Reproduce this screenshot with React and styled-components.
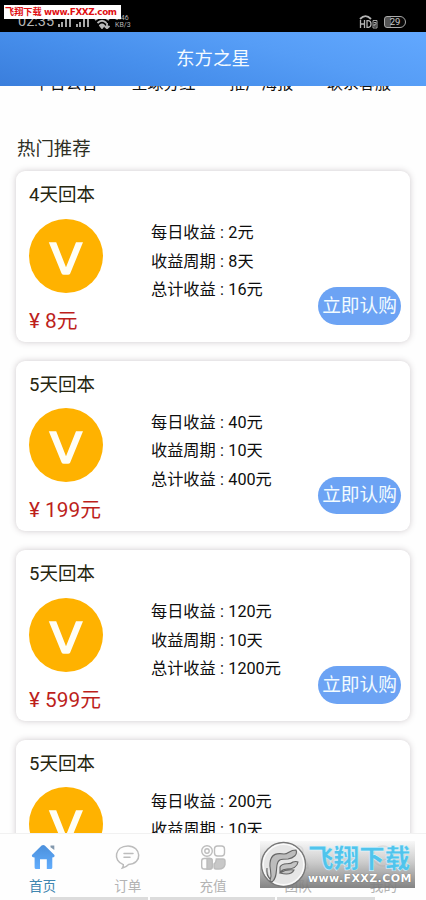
import styled, {createGlobalStyle} from 'styled-components'

const GlobalStyle = createGlobalStyle`
  * {
    box-sizing: border-box;
  }
  body {
    margin: 0;
    background: #fefefe;
    font-family: Roboto, 'Noto Sans CJK SC', sans-serif;
  }
  p, h1, h2, h3 {
    margin: 0;
    font-weight: 400;
  }
`
const Screen = styled.div`
  position: relative;
  display: flex;
  flex-direction: column;
  height: 900px;
  overflow: hidden;
`
const StatusBar = styled.div`
  display: flex;
  justify-content: space-between;
  height: 32px;
  flex-shrink: 0;
  padding: 13px 20px 0 18px;
  background: #000;
  color: #b5b5b5;
`
const StatusGroup = styled.div`
  display: flex;
  align-items: center;
  height: 17px;
  gap: ${p => p.$gap}px;
`
const Clock = styled.span`
  font-size: 14.5px;
  line-height: 17px;
  width: 36px;
`
const Speed = styled.span`
  font-size: 7px;
  line-height: 7px;
  white-space: pre;
`
const Header = styled.header`
  display: flex;
  align-items: center;
  justify-content: center;
  height: 54px;
  flex-shrink: 0;
  background: linear-gradient(15deg, #3a7edc 0%, #478fec 35%, #569df6 65%, #62a8ff 100%);
  h1 {
    color: #f4faff;
    font-size: 18.5px;
    line-height: 26px;
  }
`
const Content = styled.main`
  flex: 1;
  min-height: 0;
  overflow: hidden;
  padding: 0 16px;
`
const Menu = styled.div`
  display: grid;
  grid-template-columns: repeat(4, 1fr);
  margin: -12px 2px 0 1px;
  text-align: center;
  font-size: 16px;
  line-height: 20px;
  color: #111;
`
const SectionTitle = styled.h2`
  margin-top: 42px;
  padding-left: 1px;
  font-size: 18.4px;
  line-height: 26px;
  color: #2d2d22;
`
const CardList = styled.div`
  display: flex;
  flex-direction: column;
  gap: 19px;
  margin-top: 9px;
`
const Card = styled.section`
  display: flex;
  width: 394px;
  height: 170.5px;
  padding: 11px 9px 0 13px;
  border-radius: 9px;
  background: #fff;
  box-shadow: 0 0 6px rgba(70, 50, 60, 0.26);
`
const CardLeft = styled.div`
  width: 122px;
  flex-shrink: 0;
`
const CardTitle = styled.h3`
  font-size: 18.5px;
  line-height: 26px;
  color: #26260f;
`
const Coin = styled.svg`
  display: block;
  width: 74px;
  height: 74px;
  margin-top: 10.5px;
`
const Price = styled.p`
  margin-top: 14px;
  font-size: 20.8px;
  line-height: 28px;
  color: #bd1f1c;
  white-space: nowrap;
`
const Details = styled.div`
  flex: 1;
  padding-top: 37px;
  font-size: 16.2px;
  line-height: 28.5px;
  color: #0d0d0d;
  white-space: nowrap;
  word-spacing: 0.3px;
`
const BuyButton = styled.button`
  align-self: flex-end;
  flex-shrink: 0;
  width: 83px;
  height: 37.5px;
  margin-bottom: 17px;
  padding: 0;
  border: 0;
  border-radius: 19px;
  background: #6ca3f4;
  color: #f2fbff;
  font-family: inherit;
  font-size: 18.7px;
  line-height: 36px;
`
const TabBar = styled.nav`
  display: grid;
  grid-template-columns: repeat(5, 1fr);
  height: 64px;
  flex-shrink: 0;
  border-top: 1px solid #f1f1f1;
  background: #fefefe;
`
const Tab = styled.div`
  display: flex;
  flex-direction: column;
  align-items: center;
  padding-top: 9px;
  font-size: 13.6px;
  line-height: 18px;
  color: ${p => (p.$active ? '#3f86b0' : '#b3b3b3')};
  svg {
    display: block;
    width: 28px;
    height: 28px;
    margin-bottom: 6px;
  }
`
const HomeStrip = styled.div`
  display: flex;
  gap: 2px;
  height: 3px;
  flex-shrink: 0;
  padding: 0 51px 0 50px;
  background: #fefefe;
`
const StripPart = styled.div`
  flex: ${p => p.$grow};
  background: #dcdcdc;
`
const TopMark = styled.div`
  position: absolute;
  left: 4px;
  top: 5px;
  width: 117px;
  height: 14px;
  background: #fff;
  color: #e00f12;
  display: flex;
  align-items: center;
  white-space: nowrap;
  font-weight: 700;
  font-size: 9.2px;
  line-height: 14px;
  span {
    flex-shrink: 0;
    width: 38px;
    padding-left: 1px;
  }
  b {
    font-family: 'DejaVu Sans', sans-serif;
    font-size: 8.8px;
    letter-spacing: -0.35px;
    margin-left: 2px;
  }
`
const BottomMark = styled.div`
  position: absolute;
  left: 260px;
  top: 841px;
  display: flex;
  width: 155px;
  height: 47px;
  background: linear-gradient(rgba(245, 245, 245, 0.7), rgba(195, 195, 195, 0.85) 45%, rgba(118, 118, 118, 0.9));
  svg {
    flex-shrink: 0;
    width: 47px;
    height: 47px;
  }
`
const MarkText = styled.div`
  padding: 5px 0 0 1px;
  white-space: nowrap;
`
const MarkName = styled.div`
  font-size: 25.6px;
  line-height: 26px;
  font-weight: 900;
  color: #50c4ec;
  -webkit-text-stroke: 0.4px #e6f8ff;
`
const MarkUrl = styled.div`
  font-family: 'DejaVu Sans', sans-serif;
  font-size: 11px;
  line-height: 13px;
  font-weight: 700;
  letter-spacing: 0.4px;
  color: #fff;
  text-shadow: 0 0 1px #555;
`

const menu = ['平台公告', '全球分红', '推广海报', '联系客服']

const products = [
  {title: '4天回本', price: 8, daily: 2, days: 8, total: 16},
  {title: '5天回本', price: 199, daily: 40, days: 10, total: 400},
  {title: '5天回本', price: 599, daily: 120, days: 10, total: 1200},
  {title: '5天回本', price: 999, daily: 200, days: 10, total: 2000},
]

const HomeIcon = () => (
  <svg viewBox="0 0 28 28">
    <defs>
      <linearGradient id="home" x1="0" y1="0" x2="0" y2="1">
        <stop offset="0" stopColor="#4b90dc" />
        <stop offset="1" stopColor="#62adfd" />
      </linearGradient>
    </defs>
    <path
      d="M12.6 2.6Q14.2 1.2 15.8 2.6L25.4 12Q26.2 14.4 23.3 14.4V24.5Q23.3 26 21.8 26H17.8V16.3H11V26H7.2Q5.6 26 5.6 24.5V14.4Q2.2 14.4 3 12Z"
      fill="url(#home)"
    />
    <path d="M21.5 2.5H25.3V7L21.5 4.3Z" fill="#8298ad" />
  </svg>
)

const OrderIcon = () => (
  <svg viewBox="0 0 28 28" fill="none" stroke="#bcbcbc" strokeWidth="1.5" strokeLinecap="round">
    <path d="M9.3 21.6C-1.5 18 .7 3 14 3S29 21 14.6 21.4Q12 24.2 8.4 25Q9.6 23.2 9.3 21.6Z" />
    <path d="M10 10.4H19M10 14.2H16" />
  </svg>
)

const RechargeIcon = () => (
  <svg viewBox="0 0 28 28" fill="none" stroke="#bdbdbd" strokeWidth="1.4">
    <circle cx="8" cy="8" r="5.3" />
    <circle cx="8" cy="8" r="2.2" />
    <rect x="15.5" y="3" width="10" height="10" rx="3" />
    <rect x="2.7" y="15.5" width="10.5" height="10.5" rx="2.5" />
    <path d="M8 15.5H11Q13.2 15.5 13.2 18V23.5Q13.2 26 11 26H8Z" fill="#c4c4c4" />
    <path d="M17.3 16H24Q26 16 26 18V21.5Q25 26 20 26H17Q15 26 15 23.5V21Q17 20 17.3 16Z" fill="#c8c8c8" />
  </svg>
)

const TeamIcon = () => (
  <svg viewBox="0 0 28 28" fill="none" stroke="#bdbdbd" strokeWidth="1.5">
    <circle cx="14" cy="8" r="5" />
    <path d="M4 25Q4 15 14 15T24 25Z" />
  </svg>
)

const MineIcon = () => (
  <svg viewBox="0 0 28 28" fill="none" stroke="#bdbdbd" strokeWidth="1.5">
    <circle cx="14" cy="13" r="10" />
    <path d="M9 14Q14 20 19 14" />
  </svg>
)

const tabs = [
  {name: '首页', Icon: HomeIcon},
  {name: '订单', Icon: OrderIcon},
  {name: '充值', Icon: RechargeIcon},
  {name: '团队', Icon: TeamIcon},
  {name: '我的', Icon: MineIcon},
]

const SignalIcon = () => (
  <svg width="14" height="11" viewBox="0 0 14 11" fill="#a8a8a8">
    <path d="M0 8H2V11H0ZM3 6H5V11H3ZM7 3H9V11H7ZM11 0H13V11H11Z" />
  </svg>
)

const WifiIcon = () => (
  <svg width="17" height="14" viewBox="0 0 17 14" fill="none" stroke="#b8b8b8" strokeWidth="1.8">
    <path d="M1 5Q8 -1 15 5M3.5 8Q8 3.5 12.5 8" />
    <path d="M6 10.5Q8 8.5 10 10.5L8 13Z" fill="#b8b8b8" />
    <path d="M13 8V13M10.5 11L13 13.3L15.5 11" />
  </svg>
)

const HdIcon = () => (
  <svg width="19" height="14" viewBox="0 0 19 14" fill="none" stroke="#b5b5b5" strokeWidth="1.3">
    <path d="M1 4Q6.5 -1.6 12 4" strokeWidth="1.8" />
    <path d="M1.5 5V13M5.5 5V13M1.5 9H5.5M8 5.6V12.4H9.5Q12 12 12 9T9.5 5.6Z" />
    <path d="M14 5.5H18V13H14ZM14.8 7.5H17V9.3H15V11H17.2" strokeWidth="0.9" />
  </svg>
)

const Battery = styled.span`
  width: 22px;
  height: 12px;
  border: 1px solid #aaa;
  border-radius: 3px 6px 6px 3px;
  background: linear-gradient(90deg, #555 28%, #080808 28%);
  color: #c8c8c8;
  text-align: center;
  font-size: 9.5px;
  line-height: 10px;
`

function ProductCard({item}) {
  return (
    <Card>
      <CardLeft>
        <CardTitle>{item.title}</CardTitle>
        <Coin viewBox="0 0 74 74">
          <circle cx="37" cy="37" r="37" fill="#ffb200" />
          <path d="M19.8 23.3H27.2L37 48.3L47 23.3H54L41.2 54.4Q40.6 55.8 39 55.8H34.8Q33.2 55.8 32.6 54.4Z" fill="#fffef5" />
        </Coin>
        <Price>¥ {item.price}元</Price>
      </CardLeft>
      <Details>
        <p>每日收益 : {item.daily}元</p>
        <p>收益周期 : {item.days}天</p>
        <p>总计收益 : {item.total}元</p>
      </Details>
      <BuyButton>立即认购</BuyButton>
    </Card>
  )
}

function App() {
  return (
    <Screen>
      <GlobalStyle />
      <StatusBar>
        <StatusGroup $gap={4}>
          <Clock>02:35</Clock>
          <SignalIcon />
          <SignalIcon />
          <WifiIcon />
          <Speed>{'0.46\nKB/3'}</Speed>
        </StatusGroup>
        <StatusGroup $gap={6}>
          <HdIcon />
          <Battery>29</Battery>
        </StatusGroup>
      </StatusBar>
      <Header>
        <h1>东方之星</h1>
      </Header>
      <Content>
        <Menu>
          {menu.map(name => (
            <span key={name}>{name}</span>
          ))}
        </Menu>
        <SectionTitle>热门推荐</SectionTitle>
        <CardList>
          {products.map((item, idx) => (
            <ProductCard key={idx} item={item} />
          ))}
        </CardList>
      </Content>
      <TabBar>
        {tabs.map(({name, Icon}, idx) => (
          <Tab key={name} $active={idx === 0}>
            <Icon />
            {name}
          </Tab>
        ))}
      </TabBar>
      <HomeStrip>
        <StripPart $grow={98} />
        <StripPart $grow={125} />
        <StripPart $grow={98} />
      </HomeStrip>
      <TopMark>
        <span>飞翔下载</span>
        <b>www.FXXZ.com</b>
      </TopMark>
      <BottomMark>
        <svg viewBox="0 0 47 47">
          <circle cx="23.5" cy="23.5" r="22" fill="#e6e6e6" stroke="#777" strokeWidth="1.4" />
          <circle cx="23.5" cy="23.5" r="20.3" fill="none" stroke="#fafafa" strokeWidth="1.4" />
          <path
            d="M10 40C13 32 9 29 10 22C11 12 18 12 24 13C29 13 29 9 36 9C38 14 33 17 28 18C21 18 18 18 17 24C16 31 17 37 12 41Z"
            fill="#bdbdbd"
            stroke="#666"
            strokeWidth="1.1"
          />
          <path
            d="M20 26C23 20 29 25 33 21Q36 20 38 21C37 27 32 28 27 28Q23 28 20 31ZM20 32Q26 28 34 29Q31 35 20 32ZM7 27Q6 34 10 38"
            fill="#c4c4c4"
            stroke="#666"
            strokeWidth="1.1"
          />
        </svg>
        <MarkText>
          <MarkName>飞翔下载</MarkName>
          <MarkUrl>www.FXXZ.COM</MarkUrl>
        </MarkText>
      </BottomMark>
    </Screen>
  )
}

export default App
